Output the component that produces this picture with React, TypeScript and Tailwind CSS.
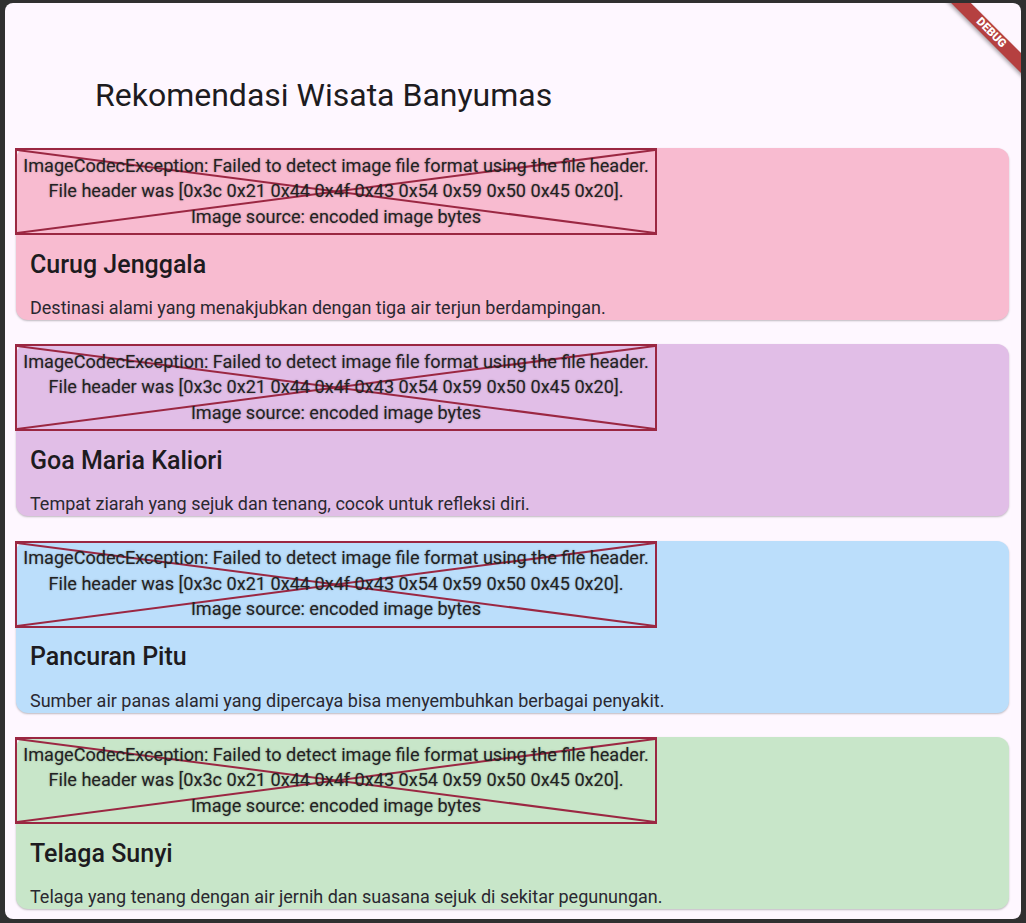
import React from 'react'

const places = [
  { name: 'Curug Jenggala', desc: 'Destinasi alami yang menakjubkan dengan tiga air terjun berdampingan.', bg: 'bg-[#f8bbd0]' },
  { name: 'Goa Maria Kaliori', desc: 'Tempat ziarah yang sejuk dan tenang, cocok untuk refleksi diri.', bg: 'bg-[#e1bee7]' },
  { name: 'Pancuran Pitu', desc: 'Sumber air panas alami yang dipercaya bisa menyembuhkan berbagai penyakit.', bg: 'bg-[#bbdefb]' },
  { name: 'Telaga Sunyi', desc: 'Telaga yang tenang dengan air jernih dan suasana sejuk di sekitar pegunungan.', bg: 'bg-[#c8e6c9]' },
]

function BrokenImage() {
  return (
    <div className="relative w-[642px] h-[87px] -ml-px border-2 border-[#9b2742]">
      <svg className="absolute inset-0 w-full h-full" viewBox="0 0 100 100" preserveAspectRatio="none">
        <line x1="0" y1="0" x2="100" y2="100" stroke="#9b2742" strokeWidth="2" vectorEffect="non-scaling-stroke" />
        <line x1="100" y1="0" x2="0" y2="100" stroke="#9b2742" strokeWidth="2" vectorEffect="non-scaling-stroke" />
      </svg>
      <div className="relative pt-[2.5px] text-center text-[18.1px] leading-[25.5px] text-[#222] whitespace-nowrap [text-shadow:0_0_2px_rgba(0,0,0,0.35)]">
        <p>ImageCodecException: Failed to detect image file format using the file header.</p>
        <p>File header was [0x3c 0x21 0x44 0x4f 0x43 0x54 0x59 0x50 0x45 0x20].</p>
        <p>Image source: encoded image bytes</p>
      </div>
    </div>
  )
}

export default function App() {
  return (
    <div className="min-h-screen bg-[#303030] pt-[3px] px-[5px] pb-[4px] font-['Roboto',sans-serif]">
      <div className="relative h-[916px] bg-[#fef7ff] rounded-lg overflow-hidden">
        {/* Debug banner */}
        <div className="absolute top-[23px] -right-[32px] w-[124px] h-[14px] rotate-45 bg-[#b54040] shadow-[0_2px_4px_rgba(0,0,0,0.35)] flex items-center justify-center">
          <span className="text-white text-[11.5px] font-black leading-none">DEBUG</span>
        </div>

        <div className="h-[145px] pl-[90px] pt-[72px]">
          <h1 className="text-[32px] leading-[40px] text-[#1d1b20]">Rekomendasi Wisata Banyumas</h1>
        </div>

        <div className="flex flex-col gap-[24.4px] pl-[11px] pr-[12px]">
          {places.map((p) => (
            <div key={p.name} className={`${p.bg} h-[172px] rounded-xl shadow-[0_1px_2px_rgba(0,0,0,0.25)]`}>
              <BrokenImage />
              <div className="pl-[14px] pt-[14.5px]">
                <h2 className="text-[25px] leading-[30px] font-medium text-[#1d1b20]">{p.name}</h2>
                <p className="mt-[16.5px] text-[18px] leading-[24px] text-[#2a2830]">{p.desc}</p>
              </div>
            </div>
          ))}
        </div>
      </div>
    </div>
  )
}
